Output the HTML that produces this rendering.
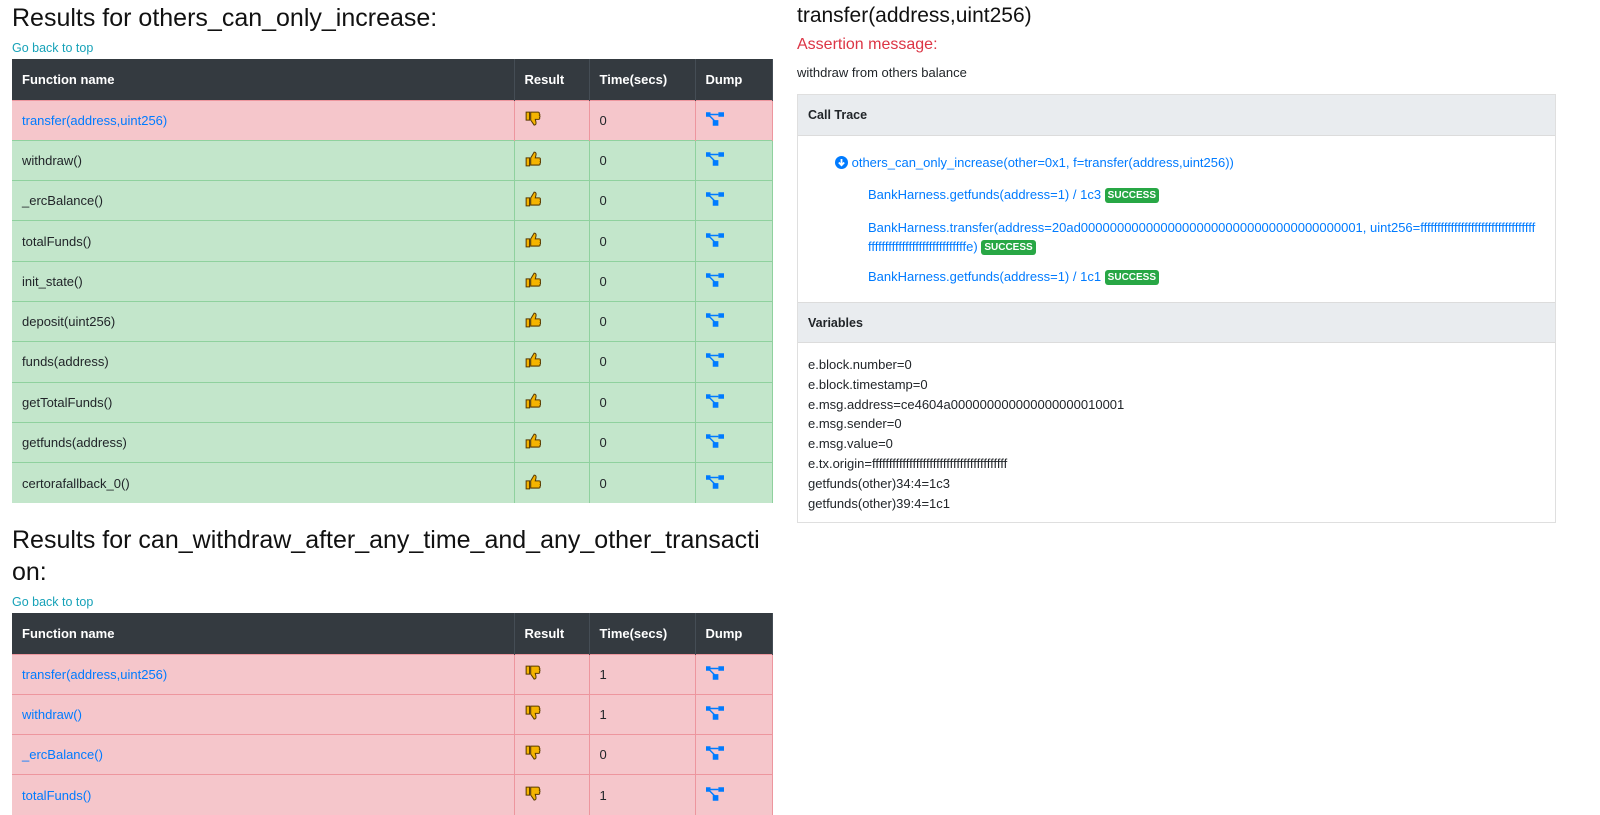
<!DOCTYPE html>
<html><head><meta charset="utf-8">
<style>
*{box-sizing:border-box;margin:0;padding:0}
body{width:1600px;height:812px;overflow:hidden;background:#fff;font-family:"Liberation Sans",sans-serif;color:#212529;position:relative}
.abs{position:absolute}
h2{font-weight:400;font-size:25px;line-height:32px;color:#111;white-space:nowrap}
.back{font-size:12.5px;color:#17a2b8}
table{border-collapse:collapse;width:760px;font-size:13px;table-layout:fixed}
th{background:#343a40;color:#fff;font-weight:700;text-align:left;height:41px;padding:0 10px;border-right:1px solid #454d55}
td{height:40.3px;padding:0 10px;border-top:1px solid;border-right:1px solid}
tr.f td{background:#f5c6cb;border-color:#ed969e}
tr.f td:first-child{color:#007bff}
tr.s td{background:#c3e6cb;border-color:#8fd19e}
.card{border:1px solid #dfdfdf}
.ch{background:#e9ecef;height:41px;line-height:41px;padding-left:10px;font-weight:700;font-size:12.5px;border-bottom:1px solid #dcdcdc}
.blue{color:#007bff}
.badge{display:inline-block;background:#28a745;color:#fff;font-size:10px;font-weight:700;padding:2px 3px;border-radius:3px;line-height:11px;vertical-align:1px}
</style></head><body>
<svg width="0" height="0" style="position:absolute">
<defs>
<symbol id="up" viewBox="0 0 14 14"><path d="M1 6h3v7H1z M5 6l3-5c1.5 0 2 1 1.5 3L9 6h3.5c1 0 1.2 1 .8 1.6.6.4.5 1.3 0 1.6.5.4.4 1.3-.2 1.6.3.6 0 1.5-1 1.5H5z" fill="#f5b400" stroke="#5a3b00" stroke-width=".9"/></symbol>
<symbol id="dn" viewBox="0 0 14 14"><path d="M1 1h3v7H1z M5 1h6.5c1 0 1.3.9 1 1.5.6.3.7 1.2.2 1.6.5.3.6 1.2 0 1.6.4.6.2 1.6-.8 1.6H9l.5 2c.5 2 0 3-1.5 3L5 8z" fill="#f5b400" stroke="#5a3b00" stroke-width=".9"/></symbol>
<symbol id="dm" viewBox="0 0 16 12"><rect x="0" y="0" width="4" height="4" fill="#007bff"/><rect x="11" y="0" width="5" height="4" fill="#007bff"/><rect x="6" y="7" width="5" height="5" fill="#007bff"/><path d="M4 2h7M3 3l5 5" stroke="#007bff" stroke-width="1.3"/></symbol>
</defs></svg>

<h2 class="abs" style="left:12px;top:2px">Results for others_can_only_increase:</h2>
<div class="abs back" style="left:12px;top:41px">Go back to top</div>
<table class="abs" style="left:12px;top:59px">
<colgroup><col style="width:502px"><col style="width:75px"><col style="width:106px"><col style="width:77px"></colgroup>
<tr><th>Function name</th><th>Result</th><th>Time(secs)</th><th>Dump</th></tr>
<tr class="f"><td>transfer(address,uint256)</td><td><svg width="16" height="16"><use href="#dn"/></svg></td><td>0</td><td><svg width="18" height="14"><use href="#dm"/></svg></td></tr>
<tr class="s"><td>withdraw()</td><td><svg width="16" height="16"><use href="#up"/></svg></td><td>0</td><td><svg width="18" height="14"><use href="#dm"/></svg></td></tr>
<tr class="s"><td>_ercBalance()</td><td><svg width="16" height="16"><use href="#up"/></svg></td><td>0</td><td><svg width="18" height="14"><use href="#dm"/></svg></td></tr>
<tr class="s"><td>totalFunds()</td><td><svg width="16" height="16"><use href="#up"/></svg></td><td>0</td><td><svg width="18" height="14"><use href="#dm"/></svg></td></tr>
<tr class="s"><td>init_state()</td><td><svg width="16" height="16"><use href="#up"/></svg></td><td>0</td><td><svg width="18" height="14"><use href="#dm"/></svg></td></tr>
<tr class="s"><td>deposit(uint256)</td><td><svg width="16" height="16"><use href="#up"/></svg></td><td>0</td><td><svg width="18" height="14"><use href="#dm"/></svg></td></tr>
<tr class="s"><td>funds(address)</td><td><svg width="16" height="16"><use href="#up"/></svg></td><td>0</td><td><svg width="18" height="14"><use href="#dm"/></svg></td></tr>
<tr class="s"><td>getTotalFunds()</td><td><svg width="16" height="16"><use href="#up"/></svg></td><td>0</td><td><svg width="18" height="14"><use href="#dm"/></svg></td></tr>
<tr class="s"><td>getfunds(address)</td><td><svg width="16" height="16"><use href="#up"/></svg></td><td>0</td><td><svg width="18" height="14"><use href="#dm"/></svg></td></tr>
<tr class="s"><td>certorafallback_0()</td><td><svg width="16" height="16"><use href="#up"/></svg></td><td>0</td><td><svg width="18" height="14"><use href="#dm"/></svg></td></tr>
</table>

<h2 class="abs" style="left:12px;top:524px">Results for can_withdraw_after_any_time_and_any_other_transacti<br>on:</h2>
<div class="abs back" style="left:12px;top:595px">Go back to top</div>
<table class="abs" style="left:12px;top:613px">
<colgroup><col style="width:502px"><col style="width:75px"><col style="width:106px"><col style="width:77px"></colgroup>
<tr><th>Function name</th><th>Result</th><th>Time(secs)</th><th>Dump</th></tr>
<tr class="f"><td>transfer(address,uint256)</td><td><svg width="16" height="16"><use href="#dn"/></svg></td><td>1</td><td><svg width="18" height="14"><use href="#dm"/></svg></td></tr>
<tr class="f"><td>withdraw()</td><td><svg width="16" height="16"><use href="#dn"/></svg></td><td>1</td><td><svg width="18" height="14"><use href="#dm"/></svg></td></tr>
<tr class="f"><td>_ercBalance()</td><td><svg width="16" height="16"><use href="#dn"/></svg></td><td>0</td><td><svg width="18" height="14"><use href="#dm"/></svg></td></tr>
<tr class="f"><td>totalFunds()</td><td><svg width="16" height="16"><use href="#dn"/></svg></td><td>1</td><td><svg width="18" height="14"><use href="#dm"/></svg></td></tr>
</table>

<div class="abs" style="left:797px;top:2px;font-size:21px;line-height:28px;color:#111">transfer(address,uint256)</div>
<div class="abs" style="left:797px;top:36px;font-size:16px;color:#dc3545">Assertion message:</div>
<div class="abs" style="left:797px;top:65px;font-size:13px">withdraw from others balance</div>

<div class="abs card" style="left:797px;top:94px;width:759px;height:429px">
<div class="ch">Call Trace</div>
<div style="font-size:13px;position:relative;height:166px">
<div class="abs blue" style="left:37px;top:19px;white-space:nowrap"><svg width="13" height="13" viewBox="0 0 13 13" style="vertical-align:-2px"><circle cx="6.5" cy="6.5" r="6.5" fill="#007bff"/><path d="M6.5 3v6M3.8 6.5l2.7 2.7 2.7-2.7" stroke="#fff" stroke-width="1.8" fill="none"/></svg> others_can_only_increase(other=0x1, f=transfer(address,uint256))</div>
<div class="abs blue" style="left:70px;top:51px;white-space:nowrap">BankHarness.getfunds(address=1) / 1c3 <span class="badge">SUCCESS</span></div>
<div class="abs blue" style="left:70px;top:82px;width:670px;word-break:break-all;line-height:19px">BankHarness.transfer(address=20ad000000000000000000000000000000000000001, uint256=fffffffffffffffffffffffffffffffffffffffffffffffffffffffffffffffe) <span class="badge">SUCCESS</span></div>
<div class="abs blue" style="left:70px;top:133px;white-space:nowrap">BankHarness.getfunds(address=1) / 1c1 <span class="badge">SUCCESS</span></div>
</div>
<div class="ch" style="border-top:1px solid #dcdcdc">Variables</div>
<div style="padding:12px 10px;font-size:13px;line-height:19.8px">
e.block.number=0<br>e.block.timestamp=0<br>e.msg.address=ce4604a000000000000000000010001<br>e.msg.sender=0<br>e.msg.value=0<br>e.tx.origin=ffffffffffffffffffffffffffffffffffffffff<br>getfunds(other)34:4=1c3<br>getfunds(other)39:4=1c1
</div>
</div>
</body></html>
